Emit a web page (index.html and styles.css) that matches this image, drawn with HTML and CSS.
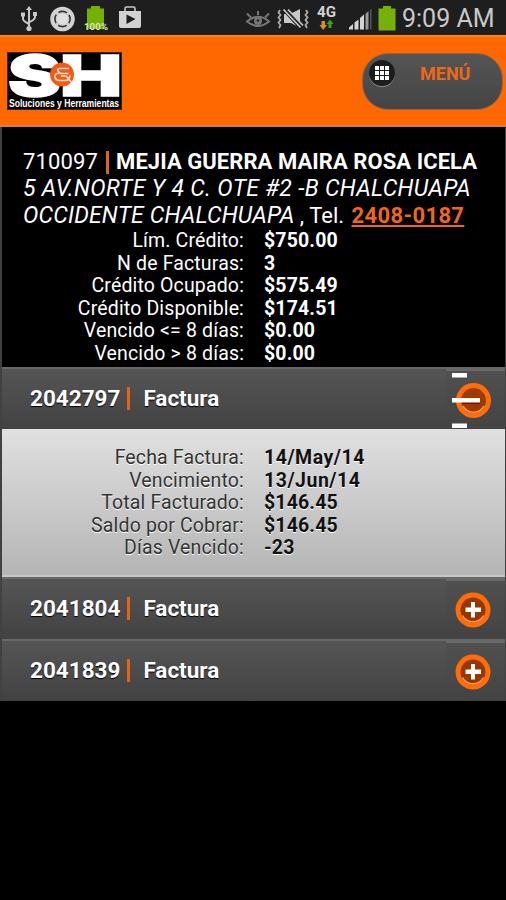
FILE: index.html
```html
<!DOCTYPE html>
<html lang="es">
  <head>
    <meta charset="UTF-8" />
    <meta name="viewport" content="width=device-width, initial-scale=1.0" />
    <title>Soluciones y Herramientas</title>
    <link rel="stylesheet" href="styles.css">
  </head>
  <body>
    <!-- Status bar -->
    <div class="status-bar">
      <svg class="status-icons" width="150" height="35" viewBox="0 0 150 35">
        <!-- USB -->
        <g fill="none" stroke="#c8c8c8" stroke-width="2">
          <path d="M29 9v20M23 14v5q0 2 6 5M35 14v3q0 3-6 5" />
          <path d="M29 6l-3 4h6zM21 12.500h4v4h-4zM33 12h4v4h-4z" fill="#c8c8c8" stroke="none" />
          <circle cx="29" cy="28.500" r="2.600" fill="#c8c8c8" stroke="none" />
        </g>
        <!-- Sync -->
        <circle cx="62.500" cy="19" r="12.300" fill="#d2d2d2" />
        <circle cx="62.500" cy="19" r="7.600" fill="none" stroke="#333" stroke-width="1.600" stroke-dasharray="9 2.940" stroke-dashoffset="4.500" />
        <circle cx="62.500" cy="19" r="5.200" fill="#e0e0e0" />
        <!-- Battery level -->
        <path d="M91 6h9v2.500h4V29H87V8.500h4z" fill="#76b000" />
        <text class="battery-text" x="84" y="29.500" textLength="24" lengthAdjust="spacingAndGlyphs">100%</text>
        <!-- Play Store -->
        <path d="M125 11V8.500q0-1.500 1.500-1.500h7q1.500 0 1.500 1.500V11" fill="none" stroke="#c8c8c8" stroke-width="1.600" />
        <path d="M119 11h22v15q0 2-2 2h-18q-2 0-2-2z" fill="#d2d2d2" />
        <path d="M126.500 14.500l9 4.500-9 5z" fill="#1d1d1d" />
      </svg>
      <svg class="status-icons" width="158" height="35" viewBox="242 0 158 35">
        <!-- Smart stay -->
        <g fill="none" stroke="#777" stroke-width="2">
          <path d="M247 21.500q11-9.500 22 0q-11 9-22 0z" />
          <path d="M247 13.500l4 4M258 11v4M269 13.500l-4 4" />
          <circle cx="258" cy="21" r="3" fill="#777" />
        </g>
        <circle cx="258" cy="20.500" r="1.300" fill="#222" />
        <!-- Vibrate -->
        <path d="M280 10l-1.500 2.500 2 2.500-2 2.500 2 2.500-2 2.500 2 2.500-1.500 3M306 10l1.500 2.500-2 2.500 2 2.500-2 2.500 2 2.500-2 2.500 1.500 3" fill="none" stroke="#aaa" stroke-width="1.800" />
        <path d="M284 14h6l10-5v19l-9-5h-7z" fill="#c8c8c8" />
        <path d="M285 9.500l17 19" stroke="#1d1d1d" stroke-width="5" />
        <path d="M283.500 9.500l17 18M288 9.500l15 16" stroke="#c4c4c4" stroke-width="1.800" />
        <!-- 4G -->
        <text class="network-text" x="317" y="17" textLength="19" lengthAdjust="spacingAndGlyphs">4G</text>
        <path d="M321.500 21h3.500v4h2l-3.800 5-3.700-5h2z" fill="#dd8b22" />
        <path d="M330 19.500l3.500 4.500h-2v4h-3v-4h-2z" fill="#35a51c" />
        <!-- Signal -->
        <path d="M349 29.500v-2l4-3.500v5.500zM354.500 29.500V22.500l4-3v10zM360 29.500V18l4-3.500v15z" fill="#d4d4d4" />
        <path d="M365.500 29.500V14l3-3v18.500z" fill="#999" />
        <path d="M370 29.500V10l1.500-1.500v21z" fill="#555" />
        <!-- Battery -->
        <path d="M383 6h8v2.500h4.500V30.500h-17V8.500h4.500z" fill="#76b009" />
      </svg>
      <span class="clock">9:09 AM</span>
    </div>

    <!-- Header -->
    <div class="header">
      <svg class="logo" width="115" height="58" viewBox="0 0 115 58" role="img">
        <rect x="0.500" y="0.500" width="114" height="57" fill="#000" stroke="#47200a" />
        <text class="logo-letter" x="1" y="43.500" textLength="53" lengthAdjust="spacingAndGlyphs">S</text>
        <text class="logo-letter" x="53" y="43.500" textLength="62" lengthAdjust="spacingAndGlyphs">H</text>
        <circle cx="55" cy="22.500" r="12" fill="#f45a13" />
        <path d="M62 16.500h-9q-3.500 0-2 2.500l2.500 2.500h8M52 21q-5 1-4 4.500q1 3 4 3h7q3 0 4-5M54 24h5l6 7" fill="none" stroke="#ffe2d2" stroke-width="1.600" />
        <text class="logo-name" x="2" y="54.500" textLength="110" lengthAdjust="spacingAndGlyphs">Soluciones y Herramientas</text>
      </svg>
      <button class="menu-btn">
        <span class="menu-icon">
          <svg width="14" height="14" viewBox="0 0 14 14">
            <path d="M0 0h4v4H0zM5 0h4v4H5zM10 0h4v4h-4zM0 5h4v4H0zM5 5h4v4H5zM10 5h4v4h-4zM0 10h4v4H0zM5 10h4v4H5zM10 10h4v4h-4z" fill="#fff" />
          </svg>
        </span>
        <span class="menu-label">MENÚ</span>
      </button>
    </div>

    <div class="content">
      <!-- Client -->
      <div class="client">
        <div class="client-line client-title"><span class="client-code">710097</span><span class="bar"></span><b class="client-name">MEJIA GUERRA MAIRA ROSA ICELA</b></div>
        <div class="client-line"><i class="street">5 AV.NORTE Y 4 C. OTE #2 -B CHALCHUAPA</i></div>
        <div class="client-line"><i class="city">OCCIDENTE CHALCHUAPA</i> , Tel. <a class="phone" href="tel:24080187">2408-0187</a></div>
        <div class="data">
          <span>Lím. Crédito:</span><b>$750.00</b>
          <span>N de Facturas:</span><b>3</b>
          <span>Crédito Ocupado:</span><b>$575.49</b>
          <span>Crédito Disponible:</span><b>$174.51</b>
          <span>Vencido &lt;= 8 días:</span><b>$0.00</b>
          <span>Vencido &gt; 8 días:</span><b>$0.00</b>
        </div>
      </div>

      <!-- Invoices -->
      <div class="invoice">
        <span class="number">2042797</span><span class="bar"></span><span>Factura</span>
        <div class="toggle">
          <svg width="60" height="60" viewBox="0 0 60 60">
            <circle cx="27.500" cy="31.500" r="17.500" fill="#ff6c08" />
            <circle cx="27.500" cy="31.500" r="12.500" fill="#9b3b00" />
            <path d="M17 37a12 12 0 0 0 21 0" fill="none" stroke="#ff9c61" stroke-width="1.500" />
            <path d="M16 30h18v5H16z" fill="#820d00" />
            <path d="M6 4h15v4.500H6zM6 29h28v4.500H6zM6 54.500h15v4.500H6z" fill="#fff" />
          </svg>
        </div>
      </div>
      <div class="detail">
        <div class="data">
          <span>Fecha Factura:</span><b class="date">14/May/14</b>
          <span>Vencimiento:</span><b class="date">13/Jun/14</b>
          <span>Total Facturado:</span><b>$146.45</b>
          <span>Saldo por Cobrar:</span><b>$146.45</b>
          <span>Días Vencido:</span><b>-23</b>
        </div>
      </div>
      <div class="invoice">
        <span class="number">2041804</span><span class="bar"></span><span>Factura</span>
        <div class="toggle">
          <svg width="60" height="60" viewBox="0 0 60 60">
            <circle cx="27" cy="31" r="17.500" fill="#ff6c08" />
            <circle cx="27" cy="31" r="12.500" fill="#963700" />
            <path d="M16.500 36.500a12 12 0 0 0 21 0" fill="none" stroke="#ff9c61" stroke-width="1.500" />
            <path d="M19.500 28.500h5.500v-5.500h4v5.500h6v4.500h-6v5.500h-4v-5.500h-5.500z" fill="#fff" />
          </svg>
        </div>
      </div>
      <div class="invoice">
        <span class="number">2041839</span><span class="bar"></span><span>Factura</span>
        <div class="toggle">
          <svg width="60" height="60" viewBox="0 0 60 60">
            <circle cx="27" cy="31" r="17.500" fill="#ff6c08" />
            <circle cx="27" cy="31" r="12.500" fill="#963700" />
            <path d="M16.500 36.500a12 12 0 0 0 21 0" fill="none" stroke="#ff9c61" stroke-width="1.500" />
            <path d="M19.500 28.500h5.500v-5.500h4v5.500h6v4.500h-6v5.500h-4v-5.500h-5.500z" fill="#fff" />
          </svg>
        </div>
      </div>
    </div>
  </body>
</html>
```
FILE: styles.css
```css
* {
  box-sizing: border-box;
}

body {
  font-family: Roboto, Arial, sans-serif;
  background: #000;
  color: #fff;
  margin: 0;
  height: 900px;
  overflow: hidden;
}

/* Status bar */
.status-bar {
  height: 35px;
  background: #1e1e1e;
  display: flex;
  align-items: center;
}

.status-icons {
  display: block;
}

.status-icons + .status-icons {
  margin-left: 92px;
}

.battery-text {
  font-size: 9px;
  font-weight: bold;
  fill: #d8e5bd;
}

.network-text {
  font-size: 14px;
  font-weight: bold;
  fill: #d2d2d2;
}

.clock {
  margin-left: 2px;
  padding-top: 2px;
  font-size: 25px;
  line-height: 30px;
  color: #c9c9c9;
  white-space: nowrap;
}

/* Header */
.header {
  height: 92px;
  padding: 16px 3px 0 7px;
  background: #ff6700;
  border-top: 2px solid #ff8a00;
  border-bottom: 2px solid #df7c33;
  display: flex;
  justify-content: space-between;
}

.logo {
  margin-top: -1px;
  overflow: visible;
}

.logo-letter {
  font-family: Inter, Arial, sans-serif;
  font-size: 57px;
  font-weight: 900;
  fill: #fff;
  stroke: #fff;
  stroke-width: 1.5px;
}

.logo-name {
  font-family: "Liberation Sans", Arial, sans-serif;
  font-size: 10.5px;
  font-weight: bold;
  fill: #fff;
}

.menu-btn {
  width: 141px;
  height: 57px;
  padding: 6px 0 0 6px;
  border: 1px solid #98633f;
  border-radius: 26px;
  background: linear-gradient(#555, #444);
  display: flex;
  align-items: flex-start;
  font-family: inherit;
}

.menu-icon {
  width: 26px;
  height: 26px;
  border-radius: 50%;
  background: #1c1c1c;
  box-shadow: 0 1px 0 #888;
  display: flex;
  align-items: center;
  justify-content: center;
}

.menu-label {
  margin-left: 25px;
  font-size: 18px;
  line-height: 28px;
  font-weight: bold;
  color: #ee6818;
}

/* Content */
.content {
  padding: 0 1px 0 2px;
  background: #414141;
}

.client {
  height: 240px;
  padding: 21px 0 0 21px;
  background: #000;
}

.client-line {
  height: 27px;
  font-size: 22px;
  line-height: 27px;
  white-space: nowrap;
}

.client-title {
  display: flex;
  align-items: center;
}

.client-code {
  letter-spacing: 0.15px;
}

.client-name {
  letter-spacing: 0.06px;
}

.street,
.city {
  font-size: 23px;
  letter-spacing: 0.33px;
}

.city {
  letter-spacing: 0.18px;
}

.bar {
  width: 3px;
  height: 23px;
  background: #e06517;
}

.client .bar {
  margin: 1px 7px 0 8px;
}

.phone {
  margin-left: 2px;
  color: #ee6818;
  font-weight: bold;
  letter-spacing: 0.35px;
  text-decoration-thickness: 2px;
  text-underline-offset: 2px;
}

.data {
  display: grid;
  grid-template-columns: 221px auto;
  column-gap: 20px;
  grid-auto-rows: 22.5px;
  padding-top: 1px;
  font-size: 19.5px;
  line-height: 22.5px;
  letter-spacing: 0.15px;
  white-space: nowrap;
}

.data span {
  text-align: right;
}

.date {
  letter-spacing: 0.5px;
}

.invoice {
  height: 62px;
  padding: 0 0 2px 28px;
  background: linear-gradient(#555, #424242);
  border-top: 2px solid #686868;
  display: flex;
  align-items: center;
  font-size: 22.5px;
  font-weight: bold;
  text-shadow: 0 1px 1px #000;
}

.invoice .bar {
  margin: 0 13px 0 7px;
}

.toggle {
  width: 59px;
  height: 60px;
  margin: 0 0 -2px auto;
  background: linear-gradient(#505050, #434343);
  border-top: 2px solid #686868;
}

.toggle svg {
  display: block;
  margin-top: -2px;
}

/* Invoice detail */
.detail {
  height: 148px;
  padding-top: 17px;
  background: linear-gradient(#e0e0e0, #b5b5b5);
  border-bottom: 2px solid #c6c6c6;
  color: #111;
  text-shadow: 0 1px 0 #fff;
}

.detail .data {
  grid-template-columns: 242px auto;
}

.detail .data span {
  color: #333;
}
```
